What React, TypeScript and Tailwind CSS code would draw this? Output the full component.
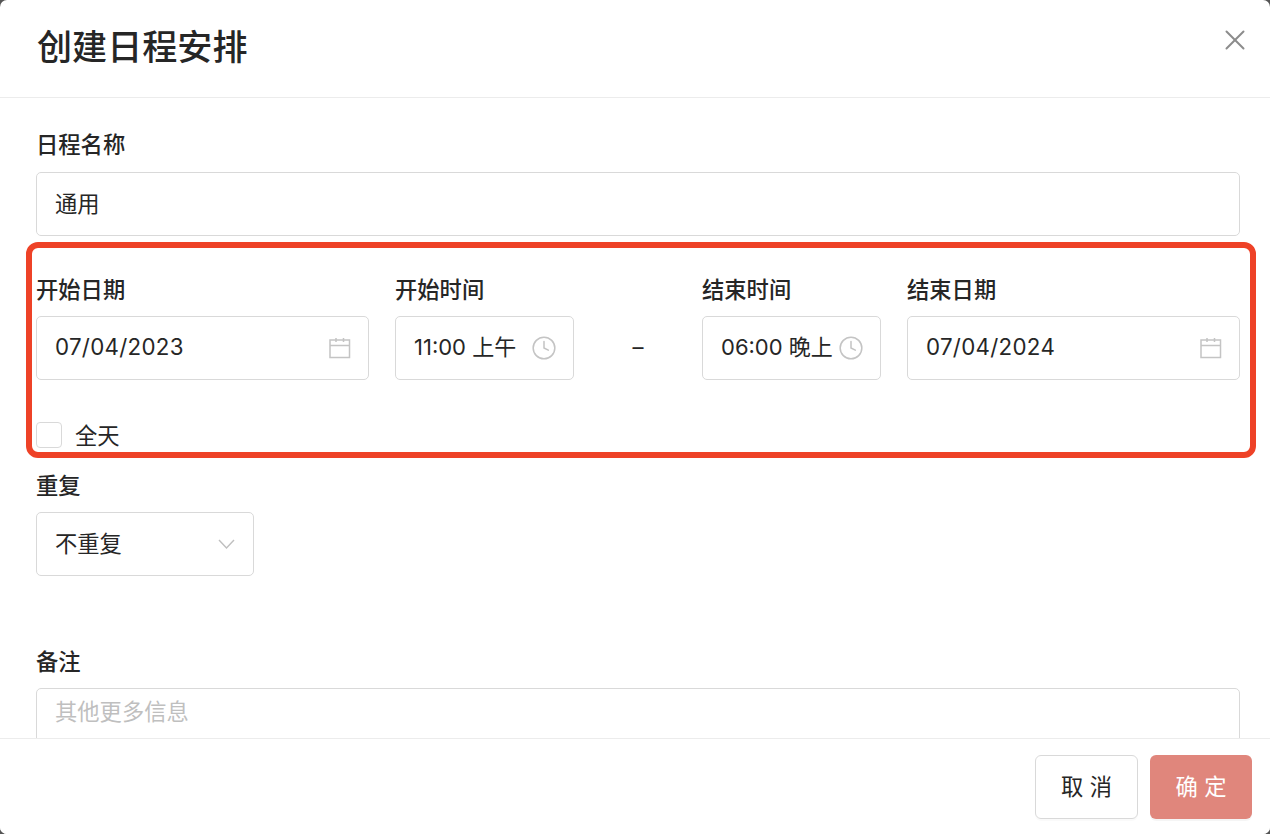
import { Clock, X } from 'lucide-react';

const cjk = '[font-family:Inter,"Noto_Sans_CJK_SC",sans-serif]';

function Label({ children, tight }: { children: React.ReactNode; tight?: boolean }) {
  return (
    <div className={`text-[22.3px] leading-[26px] font-medium text-[#262626] ${tight ? 'mb-[13px]' : 'mb-[14px]'}`}>
      {children}
    </div>
  );
}

function DateField({ value }: { value: string }) {
  return (
    <div className="h-16 flex items-center justify-between pl-[18px] pr-[17px] border border-[#d9d9d9] rounded-[5px] bg-white text-[22.3px] text-[#262626] whitespace-nowrap">
      <span className="pb-[2px] tracking-[0.3px]">{value}</span>
      <svg className="w-[22px] h-[22px] shrink-0" viewBox="0 0 22 22" fill="none" stroke="#c4c4c4" strokeWidth="1.5">
        <rect x="1" y="3" width="19.5" height="17.5" />
        <path d="M1 8.5h19.5M7 1v4M14.5 1v4" />
      </svg>
    </div>
  );
}

function TimeField({ value }: { value: string }) {
  return (
    <div className="h-16 flex items-center justify-between pl-[18px] pr-4 border border-[#d9d9d9] rounded-[5px] bg-white text-[22px] text-[#262626] whitespace-nowrap">
      <span className="pb-[2px]">{value}</span>
      <Clock className="w-[26px] h-[26px] text-[#c4c4c4] shrink-0" strokeWidth={1.4} />
    </div>
  );
}

export default function App() {
  return (
    <div className={`w-[1270px] h-[834px] bg-[#555] ${cjk}`}>
      <div className="relative w-full h-full flex flex-col bg-white rounded-[7px] overflow-hidden">
        <div className="h-[98px] shrink-0 flex items-start justify-between pl-[37px] pr-[18px] border-b border-[#ececec]">
          <h1 className="mt-[25px] text-[35.1px] leading-[44px] font-medium text-[#262626]">创建日程安排</h1>
          <X className="mt-[23px] w-[34px] h-[34px] text-[#8c8c8c]" strokeWidth={1.4} />
        </div>

        <div className="flex-1 min-h-0 overflow-hidden pl-[36px] pt-[34px] pr-[30px]">
          <Label>日程名称</Label>
          <div className="h-16 flex items-center pl-[18px] border border-[#d9d9d9] rounded-[5px] text-[22.3px] text-[#262626]">
            通用
          </div>

          <div className="mt-[41px] grid grid-cols-[333px_179px_1fr_179px_333px] gap-x-[26px]">
            <div>
              <Label tight>开始日期</Label>
              <DateField value="07/04/2023" />
            </div>
            <div>
              <Label tight>开始时间</Label>
              <TimeField value="11:00 上午" />
            </div>
            <div className="flex items-end justify-center h-[103px] pb-[16px] text-[22px] text-[#262626]">–</div>
            <div>
              <Label tight>结束时间</Label>
              <TimeField value="06:00 晚上" />
            </div>
            <div>
              <Label tight>结束日期</Label>
              <DateField value="07/04/2024" />
            </div>
          </div>

          <div className="mt-[42px] flex items-center gap-[13px]">
            <div className="w-[26px] h-[26px] border border-[#d9d9d9] rounded-[4px] bg-white" />
            <span className="translate-y-px text-[22.3px] leading-[26px] text-[#262626]">全天</span>
          </div>

          <div className="mt-[25px]">
            <Label tight>重复</Label>
            <div className="w-[218px] h-16 flex items-center justify-between pl-[18px] pr-[18px] border border-[#d9d9d9] rounded-[5px] text-[22.3px] text-[#262626]">
              <span>不重复</span>
              <svg className="w-[17px] h-[10px] -mt-px" viewBox="0 0 17 10" fill="none" stroke="#bfbfbf" strokeWidth="1.4">
                <path d="M1 1l7.5 8L16 1" />
              </svg>
            </div>
          </div>

          <div className="mt-[73px]">
            <Label tight>备注</Label>
            <div className="h-[120px] pl-[18px] pt-[8px] border border-[#d9d9d9] rounded-[5px] text-[22.3px] leading-[30px] text-[#bfbfbf]">
              其他更多信息
            </div>
          </div>
        </div>

        <div className="h-[96px] shrink-0 flex items-start justify-end gap-3 pt-4 pr-[18px] border-t border-[#ececec] bg-white">
          <button className="w-[103px] h-16 border border-[#d9d9d9] rounded-[6px] bg-white text-[22.3px] text-[#262626] shadow-[0_2px_0_rgba(0,0,0,0.02)]">取 消</button>
          <button className="w-[102px] h-16 rounded-[6px] bg-[#e0867c] text-[22.3px] text-white shadow-[0_2px_0_rgba(0,0,0,0.04)]">确 定</button>
        </div>

        <div className="absolute left-[26px] top-[242px] w-[1230px] h-[216px] border-[6px] border-[#ee4227] rounded-[12px] pointer-events-none" />
      </div>
    </div>
  );
}
